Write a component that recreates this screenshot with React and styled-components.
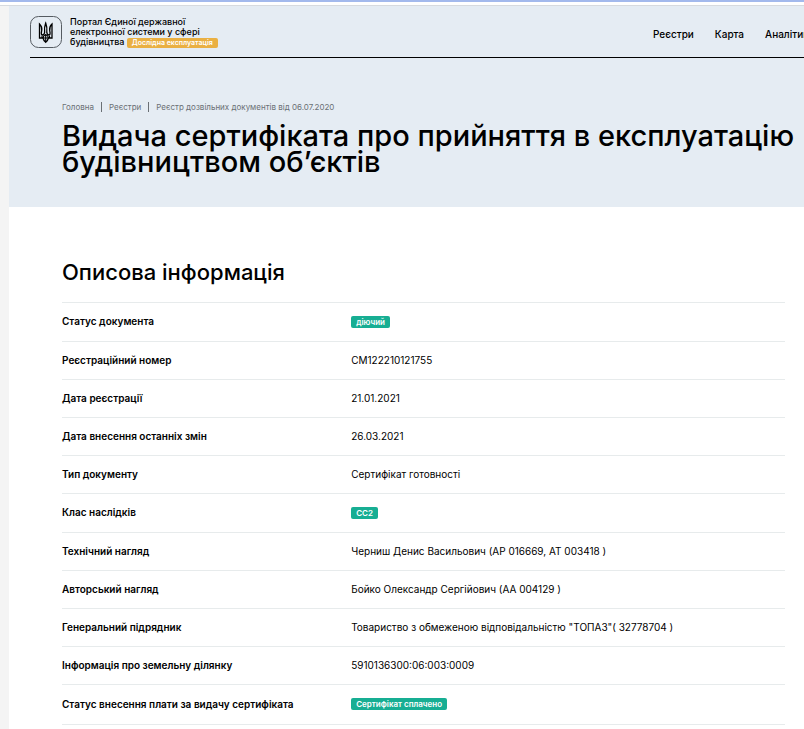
import styled, { createGlobalStyle } from "styled-components";

const GlobalStyle = createGlobalStyle`
  * {
    box-sizing: border-box;
  }

  body {
    margin: 0;
    overflow: hidden;
    background: #f4f4f4;
    color: #000;
    font-family: Inter, "Noto Sans", sans-serif;
    font-size: 10px;
  }

  a {
    color: inherit;
    text-decoration: none;
  }
`;

const TopStrip = styled.div`
  height: 6px;
  background: #fff;
  border-top: 2px solid #a3b9ec;
  border-bottom: 1px solid #d7dade;
`;

const Page = styled.div`
  margin-left: 9px;
  min-height: calc(100vh - 6px);
  background: #fff;
`;

const Hero = styled.div`
  background: #e5ecf3;
  padding-bottom: 32px;
`;

const Header = styled.header`
  display: flex;
  align-items: center;
  justify-content: space-between;
  height: 52px;
  margin-left: 21px;
  border-bottom: 1px solid #000;
`;

const Brand = styled.a`
  display: flex;
  align-items: center;
  gap: 8px;
`;

const BrandText = styled.span`
  width: 160px;
  padding-top: 2px;
  font-size: 9px;
  font-weight: 500;
  line-height: 10px;
  white-space: nowrap;
`;

const Badge = styled.span`
  display: inline-block;
  padding: 0 5px;
  border-radius: 2px;
  background: ${(props) => (props.$trial ? "#eab042" : "#17ae93")};
  color: #fff;
  font-size: ${(props) => (props.$trial ? "7px" : "8px")};
  font-weight: 600;
  line-height: ${(props) => (props.$trial ? "10px" : "12px")};
  white-space: nowrap;
`;

const Nav = styled.nav`
  display: flex;
  flex: 0 0 151px;
  min-width: 0;
  gap: 21px;
  font-weight: 500;
  line-height: 12px;
  padding-top: 4px;
  white-space: nowrap;
`;

const Intro = styled.div`
  padding: 44px 0 0 53px;
`;

const Breadcrumbs = styled.nav`
  display: flex;
  align-items: center;
  color: #6b7075;
  font-size: 8px;
  line-height: 10px;
  white-space: nowrap;

  a + a {
    margin-left: 7px;
    padding-left: 7px;
    border-left: 1px solid #6b7075;
  }
`;

const Title = styled.h1`
  margin: 11px 0 0;
  font-size: 29px;
  font-weight: 500;
  line-height: 26px;
  white-space: nowrap;
`;

const Section = styled.main`
  padding: 52px 19px 0 53px;
`;

const SectionTitle = styled.h2`
  margin: 0 0 17px;
  font-size: 22px;
  font-weight: 500;
  line-height: 26px;
`;

const InfoTable = styled.table`
  width: 100%;
  border-collapse: collapse;
  table-layout: fixed;
  line-height: 12px;
`;

const Row = styled.tr`
  height: ${(props) => (props.$badge ? "39px" : "38px")};
  border-top: 1px solid #e7ebec;
  border-bottom: 1px solid #e7ebec;

  &:last-child {
    height: 40px;
  }
`;

const Label = styled.th`
  width: 40%;
  padding: 0 0 2px;
  font-weight: 600;
  text-align: left;
`;

const Value = styled.td`
  padding: 0 0 2px;
`;

const rows = [
  { label: "Статус документа", value: "діючий", badge: true },
  { label: "Реєстраційний номер", value: "СМ122210121755" },
  { label: "Дата реєстрації", value: "21.01.2021" },
  { label: "Дата внесення останніх змін", value: "26.03.2021" },
  { label: "Тип документу", value: "Сертифікат готовності" },
  { label: "Клас наслідків", value: "СС2", badge: true },
  { label: "Технічний нагляд", value: "Черниш Денис Васильович (АР 016669, АТ 003418 )" },
  { label: "Авторський нагляд", value: "Бойко Олександр Сергійович (АА 004129 )" },
  { label: "Генеральний підрядник", value: 'Товариство з обмеженою відповідальністю "ТОПАЗ"( 32778704 )' },
  { label: "Інформація про земельну ділянку", value: "5910136300:06:003:0009" },
  { label: "Статус внесення плати за видачу сертифіката", value: "Сертифікат сплачено", badge: true },
];

function Emblem() {
  return (
    <svg width="32" height="32" viewBox="0 0 32 32" fill="none" stroke="#000" aria-hidden="true">
      <rect x="0.5" y="0.5" width="31" height="31" rx="8" stroke="#555b61" />
      <path
        d="M9.500 8v14h3.500c.4 1.800 1.300 3.100 2.700 4.300 1.400-1.200 2.300-2.500 2.700-4.300H22V8c-2 2-2.700 4-2.300 6.500l.4 2.500c.1 1.200-.4 1.900-1.300 2-1.200-.2-1.800-1-2-2.300.3-3 .1-6.700-1.100-9.700-1.200 3-1.400 6.700-1.100 9.700-.2 1.300-.8 2.100-2 2.300-.9-.1-1.400-.8-1.300-2l.4-2.500C12.200 12 11.500 10 9.500 8z"
        strokeWidth="1.300"
      />
      <path
        d="M15.700 18.500v7M13 22c.1-1.700 1.100-2.800 2.700-3.500 1.600.7 2.600 1.800 2.700 3.500M13 22h5.400M12 19.500V22M19.500 19.500V22"
        strokeWidth="1.100"
      />
    </svg>
  );
}

export default function App() {
  return (
    <>
      <GlobalStyle />
      <TopStrip />
      <Page>
        <Hero>
          <Header>
            <Brand href="/">
              <Emblem />
              <BrandText>
                Портал Єдиної державної
                <br />
                електронної системи у сфері
                <br />
                будівництва <Badge $trial>Дослідна експлуатація</Badge>
              </BrandText>
            </Brand>
            <Nav>
              <a href="/registers">Реєстри</a>
              <a href="/map">Карта</a>
              <a href="/analytics">Аналітика</a>
            </Nav>
          </Header>
          <Intro>
            <Breadcrumbs>
              <a href="/">Головна</a>
              <a href="/registers">Реєстри</a>
              <a href="/registers/permits">Реєстр дозвільних документів від 06.07.2020</a>
            </Breadcrumbs>
            <Title>
              Видача сертифіката про прийняття в експлуатацію
              <br />
              будівництвом об’єктів
            </Title>
          </Intro>
        </Hero>
        <Section>
          <SectionTitle>Описова інформація</SectionTitle>
          <InfoTable>
            <tbody>
              {rows.map((row) => {
                return (
                  <Row key={row.label} $badge={row.badge}>
                    <Label scope="row">{row.label}</Label>
                    <Value>{row.badge ? <Badge>{row.value}</Badge> : row.value}</Value>
                  </Row>
                );
              })}
            </tbody>
          </InfoTable>
        </Section>
      </Page>
    </>
  );
}
